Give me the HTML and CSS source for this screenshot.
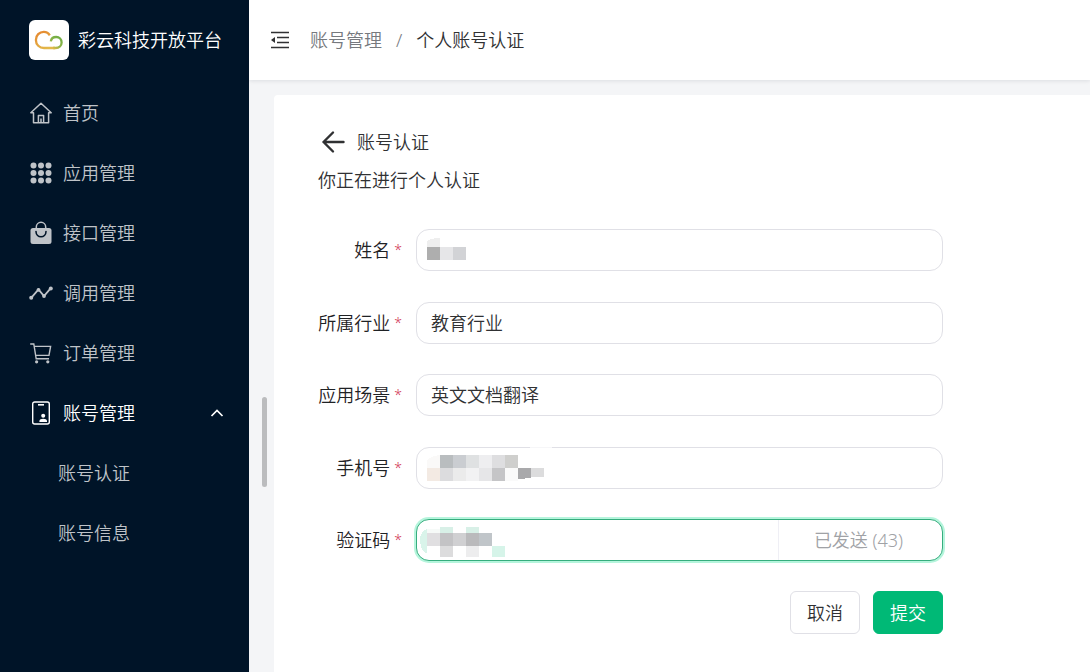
FILE: index.html
```html
<!DOCTYPE html>
<html lang="zh-CN">
<head>
<meta charset="utf-8">
<meta name="viewport" content="width=device-width, initial-scale=1">
<title>个人账号认证</title>
<link rel="stylesheet" href="styles.css">
</head>
<body>
<div class="app">
  <aside class="sidebar">
    <div class="brand">
      <span class="brand-logo">
        <svg viewBox="0 0 40 40" width="40" height="40" fill="none" aria-hidden="true">
          <defs>
            <linearGradient id="cloud" x1="10" y1="12" x2="18" y2="29" gradientUnits="userSpaceOnUse">
              <stop offset="0" stop-color="#e5892f"/><stop offset="1" stop-color="#e3b94a"/>
            </linearGradient>
            <linearGradient id="leaf" x1="32" y1="17" x2="24" y2="29" gradientUnits="userSpaceOnUse">
              <stop offset="0" stop-color="#6cac43"/><stop offset=".6" stop-color="#8fb548"/><stop offset="1" stop-color="#e3b94a"/>
            </linearGradient>
          </defs>
          <path d="M20.8 15.4C19.5 13 17.2 11.8 14.8 11.8C10.4 11.8 6.9 15.4 6.9 19.9C6.9 24.6 10.4 28 15 28H26" stroke="url(#cloud)" stroke-width="2.3"/>
          <path d="M21.8 21.4C22.2 18.8 24.5 17 27.2 17C30.3 17 32.6 19.4 32.6 22.5C32.6 25.7 30.2 28 26.6 28H24" stroke="url(#leaf)" stroke-width="2.3"/>
        </svg>
      </span>
      <span class="brand-name">彩云科技开放平台</span>
    </div>
    <nav class="menu">
      <a class="menu-item" href="#">
        <svg class="menu-icon" viewBox="0 0 24 24" aria-hidden="true"><path d="M4.5 11.8H1.8L12 2.2L22.2 11.8H19.6V21.8H14.6V14.6H9.4V21.8H4.5ZM12 17.5V21.8M9.4 21.8H14.6" fill="none" stroke="currentColor" stroke-width="1.5" stroke-linejoin="round"/></svg>
        首页
      </a>
      <a class="menu-item" href="#">
        <svg class="menu-icon" viewBox="0 0 24 24" fill="currentColor" aria-hidden="true"><circle cx="4.5" cy="4.5" r="3"/><circle cx="12" cy="4.5" r="3"/><circle cx="19.5" cy="4.5" r="3"/><circle cx="4.5" cy="12" r="3"/><circle cx="12" cy="12" r="3"/><circle cx="19.5" cy="12" r="3"/><circle cx="4.5" cy="19.5" r="3"/><circle cx="12" cy="19.5" r="3"/><circle cx="19.5" cy="19.5" r="3"/></svg>
        应用管理
      </a>
      <a class="menu-item" href="#">
        <svg class="menu-icon" viewBox="0 0 24 24" aria-hidden="true"><rect x="1.5" y="7" width="21" height="16" rx="2.5" fill="currentColor"/><path d="M7.3 7V6A4.7 4.7 0 0 1 16.7 6V7" fill="none" stroke="currentColor" stroke-width="1.5"/><path d="M7 10.5C7 17.5 17 17.5 17 10.5" fill="none" stroke="#001428" stroke-width="1.6" stroke-linecap="round"/></svg>
        接口管理
      </a>
      <a class="menu-item" href="#">
        <svg class="menu-icon" viewBox="0 0 24 24" fill="currentColor" aria-hidden="true"><path d="M2.2 16.8L9.5 8.5L15 15L21.8 7.2" fill="none" stroke="currentColor" stroke-width="1.8"/><circle cx="2.2" cy="16.8" r="2"/><circle cx="9.5" cy="8.8" r="1.9"/><circle cx="15" cy="15" r="1.9"/><circle cx="21.8" cy="7.4" r="2"/></svg>
        调用管理
      </a>
      <a class="menu-item" href="#">
        <svg class="menu-icon" viewBox="0 0 24 24" aria-hidden="true"><path d="M1.2 3H4.8L7.2 17.8H20M5.3 5.4H21.6L20 14.4H6.7" fill="none" stroke="currentColor" stroke-width="1.4"/><circle cx="7.6" cy="20.8" r="1.6" fill="currentColor"/><circle cx="18.8" cy="20.8" r="1.6" fill="currentColor"/></svg>
        订单管理
      </a>
      <a class="menu-item menu-item-active" href="#">
        <svg class="menu-icon" viewBox="0 0 24 24" aria-hidden="true"><rect x="3.7" y="1" width="16.6" height="22" rx="2" fill="none" stroke="currentColor" stroke-width="1.4"/><path d="M9 3.8H15" stroke="currentColor" stroke-width="1.6"/><circle cx="14.2" cy="14.8" r="2" fill="currentColor"/><path d="M10.4 21V19.8C10.4 17 18 17 18 19.8V21Z" fill="currentColor"/></svg>
        账号管理
        <svg class="menu-arrow" viewBox="0 0 14 14" aria-hidden="true"><path d="M1.5 10L7 4.5L12.5 10" fill="none" stroke="currentColor" stroke-width="1.7"/></svg>
      </a>
      <a class="menu-item menu-subitem" href="#">账号认证</a>
      <a class="menu-item menu-subitem" href="#">账号信息</a>
    </nav>
  </aside>

  <div class="main">
    <header class="topbar">
      <button class="icon-button" type="button" aria-label="收起菜单">
        <svg viewBox="0 0 20 20" width="20" height="20" aria-hidden="true"><path d="M1 2.5H19M7 7.5H19M7 12.5H19M1 17.5H19" stroke="currentColor" stroke-width="1.5"/><path d="M5 7V13L1 10Z" fill="currentColor"/></svg>
      </button>
      <nav class="breadcrumb" aria-label="面包屑">
        <a class="breadcrumb-link" href="#">账号管理</a>
        <span class="breadcrumb-separator">/</span>
        <span>个人账号认证</span>
      </nav>
    </header>

    <span class="scroll-thumb"></span>

    <main class="card">
      <div class="card-head">
        <button class="icon-button" type="button" aria-label="返回">
          <svg viewBox="0 0 24 24" width="24" height="24" aria-hidden="true"><path d="M12 2.5L2.5 12L12 21.5M2.5 12H22.5" fill="none" stroke="currentColor" stroke-width="2.4" stroke-linecap="round" stroke-linejoin="round"/></svg>
        </button>
        <span>账号认证</span>
      </div>
      <p class="card-note">你正在进行个人认证</p>

      <form class="form">
        <div class="fields">
          <div class="field">
            <label class="label" for="name">姓名<span class="required">*</span></label>
            <div class="control">
              <input class="input" id="name" type="text">
              <svg class="mask" viewBox="0 0 130 42" shape-rendering="crispEdges" aria-hidden="true">
                <path fill="#eeeeee" d="M11 12Q16 9 24 9V18H11Z"/><path fill="#aeaeae" d="M11 18h13v13H11z"/><path fill="#e6e6e8" d="M24 18h13v13H24z"/><path fill="#d2d3d6" d="M37 18h13v13H37z"/>
              </svg>
            </div>
          </div>
          <div class="field">
            <label class="label" for="industry">所属行业<span class="required">*</span></label>
            <div class="control"><input class="input" id="industry" type="text" value="教育行业"></div>
          </div>
          <div class="field">
            <label class="label" for="scene">应用场景<span class="required">*</span></label>
            <div class="control"><input class="input" id="scene" type="text" value="英文文档翻译"></div>
          </div>
          <div class="field">
            <label class="label" for="phone">手机号<span class="required">*</span></label>
            <div class="control">
              <input class="input" id="phone" type="tel">
              <svg class="mask" viewBox="0 0 136 42" shape-rendering="crispEdges" aria-hidden="true">
                <path fill="#ffffff" fill-opacity=".7" d="M114 0h22v3h-22z"/>
                <path fill="#faf9f8" d="M11 21V14Q14 9 24 8V21Z"/><path fill="#b9bdbf" d="M24 8h13v13H24z"/><path fill="#cacdd1" d="M37 8h13v13H37z"/><path fill="#dfe1e2" d="M50 8h13v13H50z"/><path fill="#eeeef0" d="M63 8h13v13H63z"/><path fill="#dedee0" d="M76 8h13v13H76z"/><path fill="#cfcfcd" d="M89 8h13v13H89z"/>
                <path fill="#f3eae3" d="M11 21h13v13H11z"/><path fill="#dcdcde" d="M24 21h13v13H24z"/><path fill="#ebebeb" d="M37 21h13v13H37z"/><path fill="#f2f2f3" d="M50 21h13v13H50z"/><path fill="#e6e6e8" d="M63 21h13v13H63z"/><path fill="#c5c5c7" d="M76 21h13v13H76z"/><path fill="#fafafa" d="M89 21h13v13H89z"/><path fill="#a9a9ab" d="M102 21h13v10l-13 1z"/><path fill="#dcdcdd" d="M115 21h13v9h-13z"/>
              </svg>
            </div>
          </div>
          <div class="field">
            <label class="label" for="code">验证码<span class="required">*</span></label>
            <div class="control control-focus">
              <input class="input" id="code" type="text">
              <button class="send" type="button" disabled>已发送 (43)</button>
              <svg class="mask" viewBox="0 0 130 42" shape-rendering="crispEdges" aria-hidden="true">
                <path fill="#d9f4ea" d="M11 10Q4 13 4 20Q4 29 9 34H11Z"/>
                <path fill="#f6faf8" d="M11 10h13v4H11z"/><path fill="#d8f0e7" d="M24 8h13v6H24zM50 8h13v6H50z"/>
                <path fill="#e0dfe1" d="M11 14h13v13H11z"/><path fill="#c3c3c5" d="M24 14h13v13H24z"/><path fill="#d0d0d2" d="M37 14h13v13H37z"/><path fill="#bababc" d="M50 14h13v13H50z"/><path fill="#c0c5c9" d="M63 14h13v13H63z"/>
                <path fill="#dcdcdd" d="M24 27h13v11H24z"/><path fill="#ededee" d="M50 27h13v11H50z"/><path fill="#d6f4e9" d="M76 27h13v11H76z"/>
              </svg>
            </div>
          </div>
        </div>
        <div class="actions">
          <button class="button" type="button">取消</button>
          <button class="button button-primary" type="submit">提交</button>
        </div>
      </form>
    </main>
  </div>
</div>
</body>
</html>
```
FILE: styles.css
```css
* {
  box-sizing: border-box;
}

body {
  margin: 0;
  color: #303133;
  background: #f4f5f7;
  font-family: "Noto Sans", "Noto Sans CJK SC", sans-serif;
  font-size: 18px;
  font-weight: 350;
  line-height: 24px;
}

a {
  color: inherit;
  text-decoration: none;
}

button,
input {
  font: inherit;
  color: inherit;
}

.app {
  display: flex;
  min-height: 100vh;
}

.sidebar {
  flex: 0 0 249px;
  background: #001428;
  color: #fff;
}

.brand {
  display: flex;
  align-items: center;
  gap: 9px;
  height: 80px;
  padding-left: 29px;
}

.brand-logo {
  display: flex;
  border-radius: 6px;
  background: #fff;
}

.menu {
  padding-top: 3px;
}

.menu-item {
  display: flex;
  align-items: center;
  gap: 10px;
  height: 60px;
  padding: 0 25px 0 29px;
  color: #bfc3c8;
}

.menu-item-active {
  color: #fff;
}

.menu-subitem {
  padding-left: 58px;
}

.menu-icon {
  width: 24px;
  height: 24px;
}

.menu-arrow {
  width: 14px;
  height: 14px;
  margin-left: auto;
}

.main {
  position: relative;
  display: flex;
  flex: 1;
  flex-direction: column;
  min-width: 0;
}

.topbar {
  display: flex;
  align-items: center;
  gap: 20px;
  height: 80px;
  padding: 0 21px;
  background: #fff;
  box-shadow: 0 1px 4px rgba(0, 21, 41, 0.1);
}

.icon-button {
  display: flex;
  padding: 0;
  border: 0;
  background: none;
}

.breadcrumb {
  display: flex;
  gap: 14px;
}

.breadcrumb-link,
.breadcrumb-separator {
  color: #76797e;
}

.scroll-thumb {
  position: absolute;
  top: 397px;
  left: 13px;
  width: 5px;
  height: 90px;
  border-radius: 3px;
  background: #bbbcbe;
}

.card {
  flex: 1;
  margin: 15px 0 0 25px;
  padding: 35px 44px;
  border-radius: 4px 0 0 0;
  background: #fff;
}

.card-head {
  display: flex;
  align-items: center;
  gap: 12px;
  padding-left: 3px;
}

.card-note {
  margin: 14px 0 37px;
}

.form {
  max-width: 625px;
}

.fields {
  display: flex;
  flex-direction: column;
  justify-content: space-between;
  min-height: 332px;
}

.field {
  display: flex;
  align-items: center;
}

.label {
  display: flex;
  flex: 0 0 98px;
  justify-content: flex-end;
  gap: 4px;
  padding-right: 14px;
  color: #1f2225;
  white-space: nowrap;
}

.required {
  color: #d03050;
  font-size: 14px;
}

.control {
  position: relative;
  display: flex;
  flex: 1;
  min-width: 0;
  height: 42px;
  border: 1px solid #e0e0e6;
  border-radius: 13px;
  background: #fff;
}

.control-focus {
  border-color: #36ad7e;
  box-shadow: 0 0 0 2px #b5f5dc;
}

.input {
  flex: 1;
  min-width: 0;
  padding: 0 14px;
  border: 0;
  outline: 0;
  background: none;
}

.send {
  flex: 0 0 164px;
  padding: 0 4px 0 0;
  border: 0;
  border-left: 1px solid #efeff5;
  background: none;
  color: #a0a2a6;
}

.mask {
  position: absolute;
  top: -1px;
  left: -1px;
  height: 42px;
  pointer-events: none;
}

.actions {
  display: flex;
  justify-content: flex-end;
  gap: 13px;
  margin-top: 30px;
}

.button {
  width: 70px;
  height: 43px;
  padding: 0;
  border: 1px solid #e0e0e6;
  border-radius: 6px;
  background: #fff;
}

.button-primary {
  border-color: #00b976;
  background: #00b976;
  color: #fff;
}
```
